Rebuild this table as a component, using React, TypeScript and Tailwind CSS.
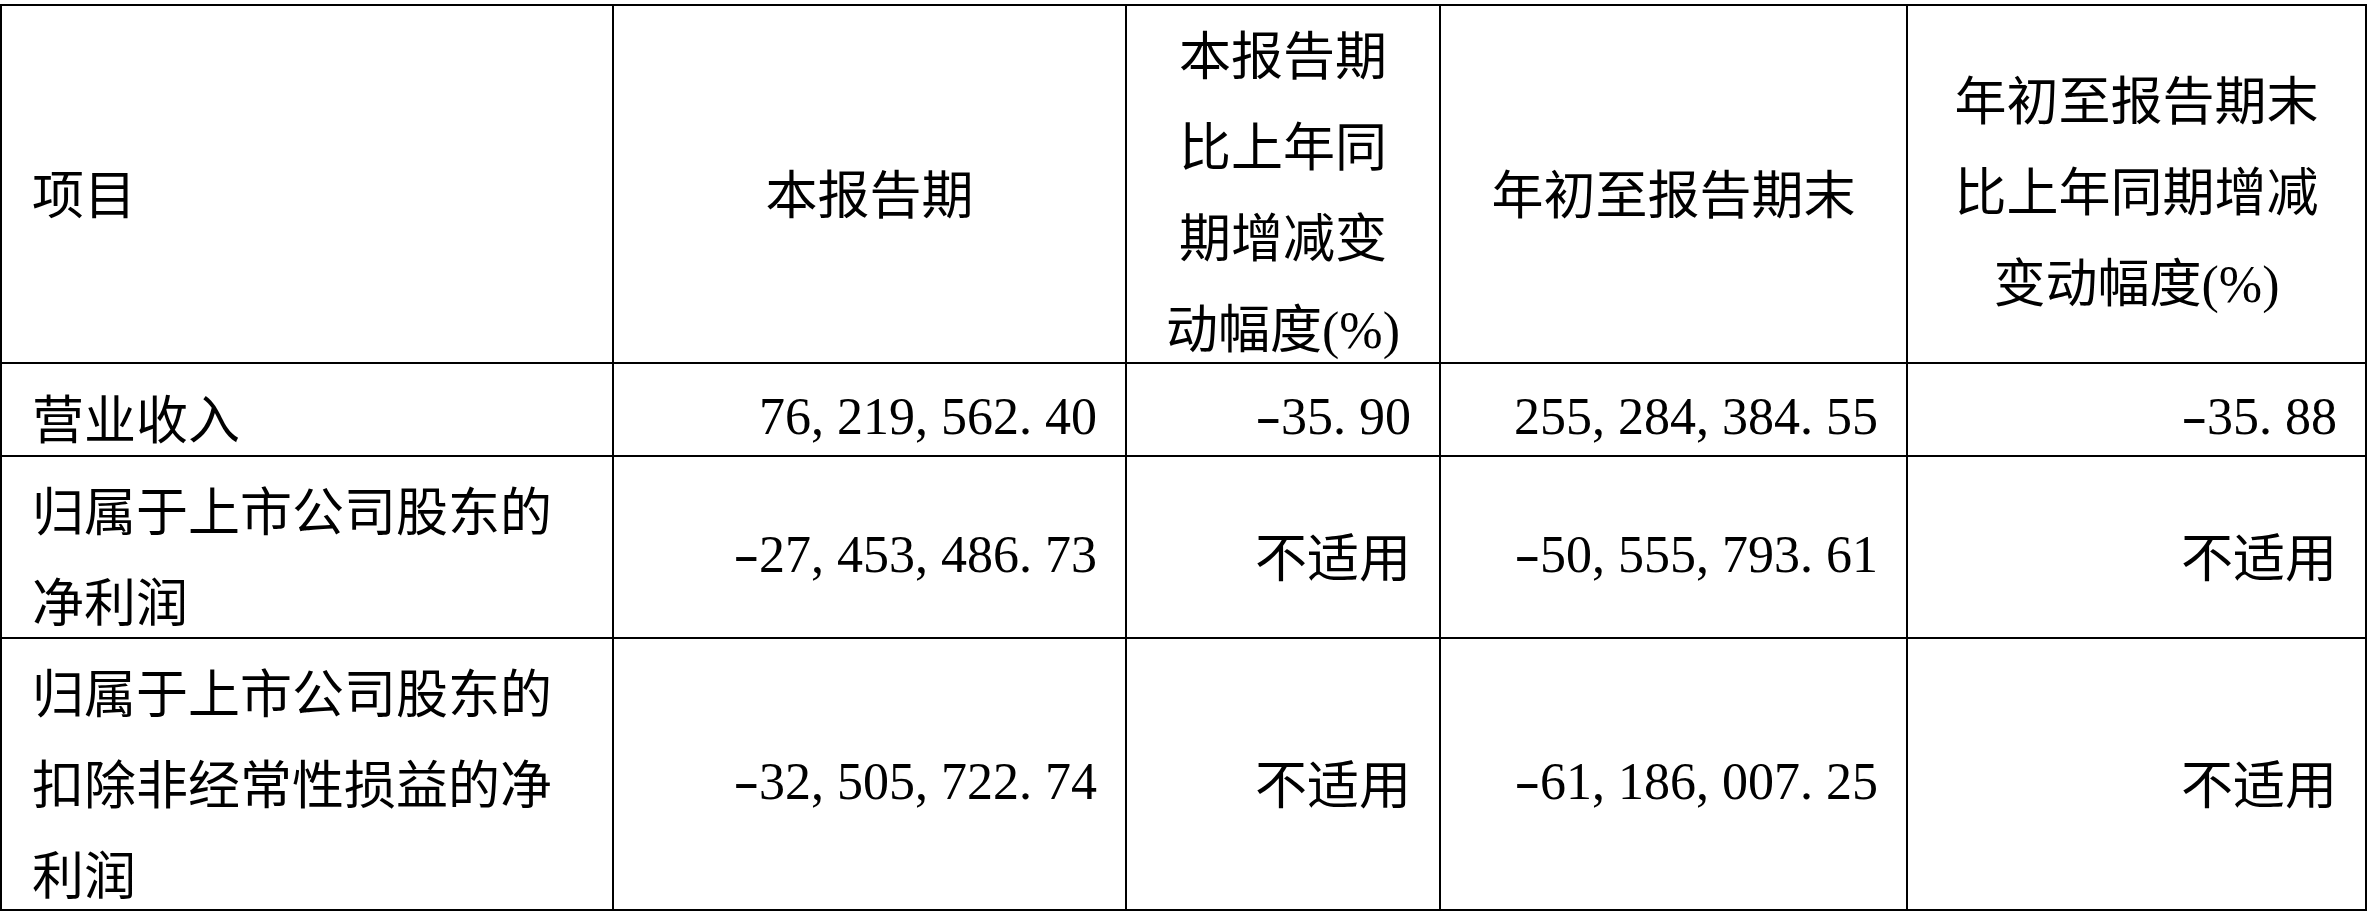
import React from "react";

// quarterly key figures table: 5 columns, header + 3 data rows

const cjk = "font-['Noto_Sans_CJK_SC',sans-serif]";

const cell =
  "flex items-center border-r-2 border-b-2 border-black text-[52px] leading-[91px] text-black pt-[14px]";

function Num({ v }: { v: string }) {
  const parts = v.split(/([^0-9])/).filter((p) => p !== "");
  return (
    <span className="font-['Liberation_Serif',serif] whitespace-nowrap">
      {parts.map((p, i) => {
        if (/^[0-9]+$/.test(p)) return <span key={i}>{p}</span>;
        if (p === "-")
          return (
            <span key={i} className="inline-block w-[0.5em] text-right">
              <span className="inline-block scale-x-[1.5] origin-right">-</span>
            </span>
          );
        return (
          <span key={i} className="inline-block w-[0.5em]">
            {p}
          </span>
        );
      })}
    </span>
  );
}

function Pct() {
  return <span className="font-['Liberation_Serif',serif]">(%)</span>;
}

type Row = {
  label: React.ReactNode;
  h: string;
  cur: string;
  curPct: string;
  ytd: string;
  ytdPct: string;
};

const rows: Row[] = [
  {
    label: "营业收入",
    h: "h-[93px]",
    cur: "76,219,562.40",
    curPct: "-35.90",
    ytd: "255,284,384.55",
    ytdPct: "-35.88",
  },
  {
    label: (
      <>
        归属于上市公司股东的
        <br />
        净利润
      </>
    ),
    h: "h-[182px]",
    cur: "-27,453,486.73",
    curPct: "不适用",
    ytd: "-50,555,793.61",
    ytdPct: "不适用",
  },
  {
    label: (
      <>
        归属于上市公司股东的
        <br />
        扣除非经常性损益的净
        <br />
        利润
      </>
    ),
    h: "h-[272px]",
    cur: "-32,505,722.74",
    curPct: "不适用",
    ytd: "-61,186,007.25",
    ytdPct: "不适用",
  },
];

function Value({ v }: { v: string }) {
  if (/[0-9]/.test(v)) return <Num v={v} />;
  return <span>{v}</span>;
}

export default function App() {
  return (
    <div className={`w-[2368px] h-[911px] bg-white pt-[4px] ${cjk}`}>
      <div className="grid grid-cols-[612px_513px_314px_467px_459px] border-l-2 border-t-2 border-black w-[2367px]">
        {/* header */}
        <div className={`${cell} h-[358px] justify-start pl-[30px]`}>项目</div>
        <div className={`${cell} h-[358px] justify-center text-center`}>本报告期</div>
        <div className={`${cell} h-[358px] justify-center text-center`}>
          <div>
            本报告期
            <br />
            比上年同
            <br />
            期增减变
            <br />
            动幅度<Pct />
          </div>
        </div>
        <div className={`${cell} h-[358px] justify-center text-center`}>年初至报告期末</div>
        <div className={`${cell} h-[358px] justify-center text-center`}>
          <div>
            年初至报告期末
            <br />
            比上年同期增减
            <br />
            变动幅度<Pct />
          </div>
        </div>

        {rows.map((r, i) => (
          <React.Fragment key={i}>
            <div className={`${cell} ${r.h} justify-start pl-[30px]`}>
              <div>{r.label}</div>
            </div>
            <div className={`${cell} ${r.h} justify-end pr-[28px]`}>
              <Value v={r.cur} />
            </div>
            <div className={`${cell} ${r.h} justify-end pr-[28px]`}>
              <Value v={r.curPct} />
            </div>
            <div className={`${cell} ${r.h} justify-end pr-[28px]`}>
              <Value v={r.ytd} />
            </div>
            <div className={`${cell} ${r.h} justify-end pr-[28px]`}>
              <Value v={r.ytdPct} />
            </div>
          </React.Fragment>
        ))}
      </div>
    </div>
  );
}
